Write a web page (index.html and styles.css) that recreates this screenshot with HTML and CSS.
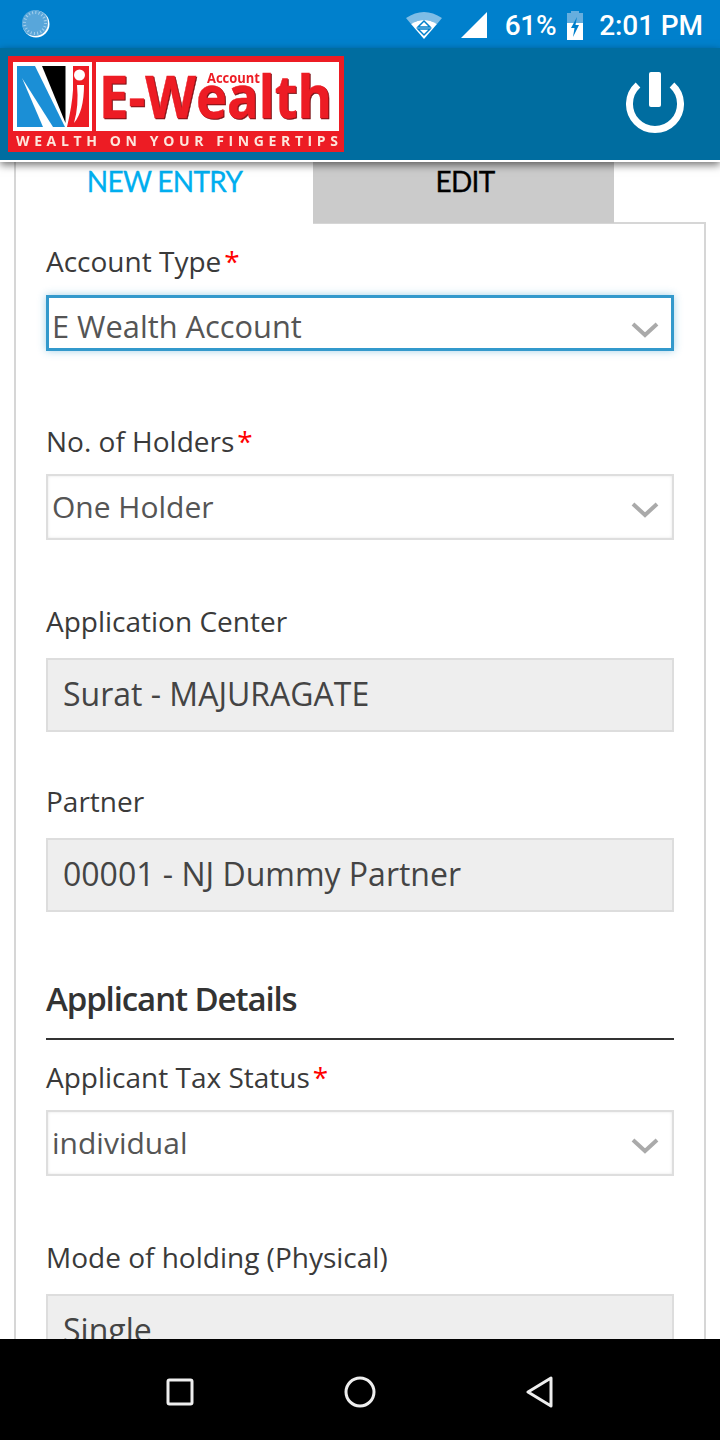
FILE: index.html
```html
<!DOCTYPE html>
<html lang="en">
<head>
<meta charset="utf-8">
<title>E-Wealth Account</title>
<link rel="stylesheet" href="styles.css">
</head>
<body>
<div class="screen">
  <div class="status">
    <svg class="sync" width="28" height="28" viewBox="0 0 28 28">
      <circle cx="14" cy="14" r="13.5" fill="#fff"/>
      <circle cx="13" cy="13" r="13" fill="#58a6da"/>
      <circle cx="13" cy="13" r="10.5" fill="none" stroke="#a5d0ec" stroke-width="3" stroke-dasharray="1 2.3"/>
    </svg>
    <div class="status-right">
      <svg class="wifi" width="36" height="28" viewBox="0 0 36 28">
        <path d="M0 7 Q18 -5 36 7 L31 13 Q18 5 5 13Z" fill="#7fbde6"/>
        <path d="M5 13 Q18 5 31 13 L18 28Z" fill="#fff"/>
        <path d="M18 10 L24 16 H12Z M12 18 H24 L18 24Z" fill="#fff" stroke="#0080cc" stroke-width="1.5"/>
      </svg>
      <svg class="signal" width="26" height="26" viewBox="0 0 26 26"><path d="M26 0V26H0Z" fill="#fff"/></svg>
      <span class="pct">61%</span>
      <svg class="batt" width="16" height="29" viewBox="0 0 16 29">
        <path d="M4 0H12V2H16V12H0V2H4Z" fill="#66aede"/>
        <path d="M0 12H16V29H0Z" fill="#fff"/>
        <path d="M10 6 L4 17 H7.500 L6 26 L12 14 H8.500Z" fill="#0080cc"/>
      </svg>
      <span class="time">2:01 PM</span>
    </div>
  </div>
  <header class="appbar">
    <svg class="logo" width="336" height="96" viewBox="0 0 336 96">
      <rect width="336" height="96" fill="#ed1c24"/>
      <rect x="5" y="6" width="79" height="69" fill="#fff"/>
      <rect x="88" y="6" width="243" height="69" fill="#fff"/>
      <path d="M9 10 H27 L57 71 H9Z" fill="#1b8fd6"/>
      <path d="M34 10 H57.500 V67Z" fill="#000"/>
      <path d="M14 22 L45 71 H35Z" fill="#fff"/>
      <path d="M65 10 H81 V71 H59 Q64 50 65 34Z" fill="#ed1c24"/>
      <circle cx="71.500" cy="19" r="5.500" fill="#fff"/>
      <path d="M69 29 H76 Q76 55 66 67 Q71 50 69 29Z" fill="#fff"/>
      <text class="logo-main" x="91" y="61.500" textLength="233" lengthAdjust="spacingAndGlyphs">E-Wealth</text>
      <text class="logo-sub" x="199" y="27" textLength="53" lengthAdjust="spacingAndGlyphs">Account</text>
      <text class="logo-tag" x="8" y="90" textLength="322">WEALTH ON YOUR FINGERTIPS</text>
    </svg>
    <svg class="power" width="58" height="63" viewBox="0 0 58 63">
      <path d="M12 13 A25.500 25.500 0 1 0 46 13" fill="none" stroke="#fff" stroke-width="7"/>
      <rect x="23" y="0" width="12" height="35" rx="2" fill="#fff"/>
    </svg>
  </header>
  <main class="content">
    <div class="tabs">
      <div class="tab tab-active">NEW ENTRY</div>
      <div class="tab tab-idle">EDIT</div>
    </div>
    <div class="panel">
      <div class="field">
        <div class="label">Account Type<span class="req">*</span></div>
        <div class="select select-focus"><span>E Wealth Account</span>
          <svg class="chev" width="28" height="18" viewBox="0 0 28 18"><path d="M2 3 L14 14 L26 3" fill="none" stroke="#aaa" stroke-width="4"/></svg>
        </div>
      </div>
      <div class="field">
        <div class="label">No. of Holders<span class="req">*</span></div>
        <div class="select"><span>One Holder</span>
          <svg class="chev" width="28" height="18" viewBox="0 0 28 18"><path d="M2 3 L14 14 L26 3" fill="none" stroke="#aaa" stroke-width="4"/></svg>
        </div>
      </div>
      <div class="field">
        <div class="label">Application Center</div>
        <div class="readonly">Surat - MAJURAGATE</div>
      </div>
      <div class="field">
        <div class="label">Partner</div>
        <div class="readonly">00001 - NJ Dummy Partner</div>
      </div>
      <h2 class="section">Applicant Details</h2>
      <div class="field">
        <div class="label">Applicant Tax Status<span class="req">*</span></div>
        <div class="select"><span>individual</span>
          <svg class="chev" width="28" height="18" viewBox="0 0 28 18"><path d="M2 3 L14 14 L26 3" fill="none" stroke="#aaa" stroke-width="4"/></svg>
        </div>
      </div>
      <div class="field">
        <div class="label">Mode of holding (Physical)</div>
        <div class="readonly">Single</div>
      </div>
    </div>
  </main>
  <nav class="navbar">
    <svg width="28" height="28" viewBox="0 0 28 28"><rect x="2" y="2" width="24" height="24" rx="1.500" fill="none" stroke="#eee" stroke-width="3"/></svg>
    <svg width="32" height="32" viewBox="0 0 32 32"><circle cx="16" cy="16" r="14" fill="none" stroke="#eee" stroke-width="3"/></svg>
    <svg width="28" height="32" viewBox="0 0 28 32"><path d="M25 2 V30 L2 16Z" fill="none" stroke="#eee" stroke-width="3" stroke-linejoin="round"/></svg>
  </nav>
</div>
</body>
</html>
```

FILE: styles.css
```css
* { box-sizing: border-box; }
html, body { margin: 0; padding: 0; background: #fff; }
.screen { width: 720px; height: 1440px; display: flex; flex-direction: column; overflow: hidden; font-family: "Open Sans", sans-serif; }

.status { height: 48px; flex: none; background: #0080cc; display: flex; align-items: center; justify-content: space-between; padding: 2px 17px 0 22px; color: #fff; font-family: Roboto, sans-serif; font-size: 28px; font-weight: 500; }
.sync { margin-bottom: 2px; }
.status-right { display: flex; align-items: center; }
.wifi { margin-right: 19px; }
.signal { margin-right: 18px; }
.pct { margin-right: 11px; letter-spacing: -.3px; }
.batt { margin-right: 16px; }
.time { letter-spacing: -.1px; }

.appbar { height: 114px; flex: none; background: #006da0; border-bottom: 2px solid #fff; box-shadow: 0 3px 8px rgba(0,0,0,.55); display: flex; align-items: flex-start; justify-content: space-between; padding: 8px 36px 0 8px; position: relative; z-index: 2; }
.power { margin-top: 16px; }
.logo { display: block; filter: blur(.4px); }
.logo-main { font: 700 59px "Open Sans", sans-serif; fill: #ed1c24; stroke: #ed1c24; stroke-width: .5px; filter: drop-shadow(1px 1px 0 #7a1015); }
.logo-sub { font: 700 15px "Open Sans", sans-serif; fill: #ed1c24; }
.logo-tag { font: 700 14px "Open Sans", sans-serif; fill: #fde6dc; }

.content { flex: 1; min-height: 0; overflow: hidden; padding: 0 14px; }
.tabs { display: flex; height: 62px; }
.tab { text-align: center; font-family: Lato, sans-serif; font-size: 28px; letter-spacing: -.7px; line-height: 38px; -webkit-text-stroke: .3px currentColor; }
.tab-active { width: 299px; color: #00aeef; border-left: 2px solid #d6d6d6; background: #fff; position: relative; z-index: 1; height: 62px; }
.tab-idle { width: 301px; height: 61px; color: #000; background: #cbcbcb; padding-left: 3px; }

.panel { margin-top: -2px; width: 692px; border: 2px solid #d6d6d6; border-bottom: 0; padding: 18px 30px 0; }
.field { height: 180px; }
.label { height: 40px; line-height: 38px; font-size: 28px; color: #3a3a3a; }
.req { color: #f00; margin-left: 3px; }

.select { margin-top: 12px; height: 66px; border: 2px solid #dedede; background: #fff; box-shadow: inset 0 0 3px #e4e4e4; display: flex; align-items: center; justify-content: space-between; padding: 0 13px 0 4px; font-size: 30px; color: #555; }
.select span { margin-bottom: 2px; }
.chev { display: block; margin-top: 6px; }
.select-focus { margin-top: 13px; height: 56px; border: 3px solid #3399cc; box-shadow: 0 0 8px rgba(51,153,204,.45); font-size: 30.800px; padding-left: 3px; padding-right: 12px; }
.select-focus span { margin: 6px 0 0; }
.select-focus .chev { margin-top: 14px; }
.readonly { margin-top: 16px; height: 74px; background: #eee; border: 2px solid #ddd; padding: 0 15px; font-size: 32px; line-height: 68px; color: #444; }

.section { margin: 0 0 18px; height: 78px; border-bottom: 2px solid #333; font-size: 33px; font-weight: 600; letter-spacing: -1.1px; line-height: 38px; padding-top: 18px; color: #333; }

.navbar { height: 101px; flex: none; background: #000; display: flex; align-items: center; justify-content: center; gap: 150px; padding-top: 5px; }
```
